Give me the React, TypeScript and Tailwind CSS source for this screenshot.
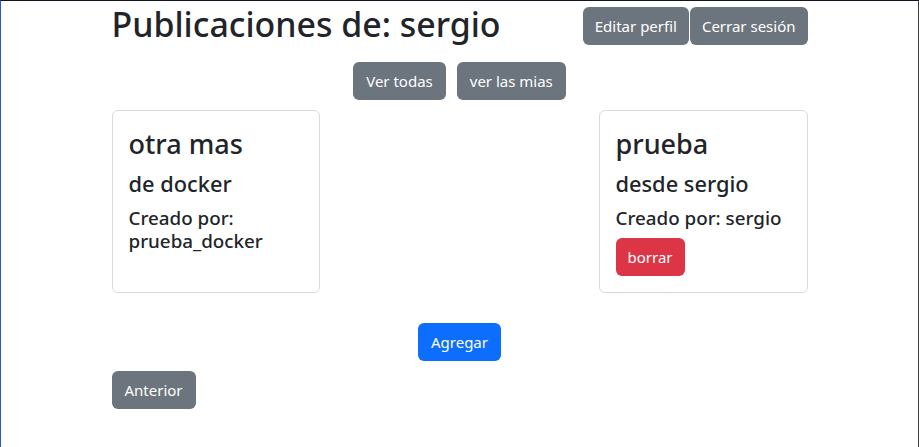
import React from 'react';

const posts = [
  { id: 1, title: 'otra mas', body: 'de docker', author: 'prueba_docker', mine: false },
  { id: 2, title: 'prueba', body: 'desde sergio', author: 'sergio', mine: true },
];

const btn = 'inline-block rounded-[6px] py-[6px] text-[15px] leading-[24px] text-white border border-transparent';

export default function App() {
  return (
    <div
      className="min-h-screen bg-white border-t border-l border-r border-t-[#111522] border-l-[#2a58c6] border-r-[#3b3f3a] text-[#212529]"
      style={{ fontFamily: '"Noto Sans", "Open Sans", sans-serif' }}
    >
      <div className="w-[720px] mx-auto px-3">

        {/* HEADER */}
        <div className="flex items-start justify-between">
          <h1 className="mt-[2px] text-[33.9px] leading-[43px] font-medium">Publicaciones de: sergio</h1>
          <div className="flex gap-px mt-[6px]">
            <button className={`${btn} px-[11px] bg-[#6c757d]`}>Editar perfil</button>
            <button className={`${btn} px-[11px] bg-[#6c757d]`}>Cerrar sesión</button>
          </div>
        </div>

        {/* FILTERS */}
        <div className="flex justify-center gap-[11px] mt-[16px]">
          <button className={`${btn} px-3 bg-[#6c757d]`}>Ver todas</button>
          <button className={`${btn} px-3 bg-[#6c757d]`}>ver las mias</button>
        </div>

        {/* POSTS */}
        <div className="flex justify-between mt-[10px]">
          {posts.map((post) => (
            <div
              key={post.id}
              className={`${post.mine ? 'w-[209px]' : 'w-[208px]'} rounded-[6px] border border-[#dadada] p-4`}
            >
              <h3 className="text-[27px] leading-[34px] font-medium mb-[9px]">{post.title}</h3>
              <h4 className="text-[21.8px] leading-[28px] font-medium mb-[9px]">{post.body}</h4>
              <h5 className="text-[18.8px] leading-[23px] font-medium mb-2">Creado por: {post.author}</h5>
              {post.mine && (
                <button className={`${btn} px-[11px] bg-[#dc3545]`}>borrar</button>
              )}
            </div>
          ))}
        </div>

        {/* ACTIONS */}
        <div className="flex justify-center mt-[30px]">
          <button className={`${btn} px-3 bg-[#0d6efd]`}>Agregar</button>
        </div>
        <div className="mt-[10px]">
          <button className={`${btn} px-3 bg-[#6c757d]`}>Anterior</button>
        </div>

      </div>
    </div>
  );
}
